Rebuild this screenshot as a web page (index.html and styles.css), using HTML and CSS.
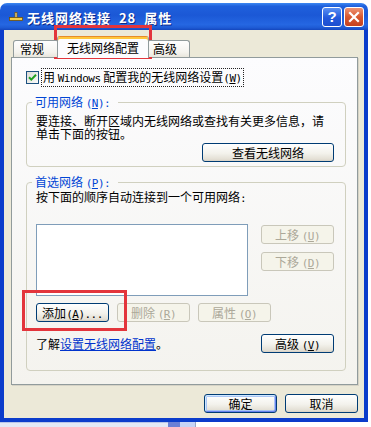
FILE: index.html
```html
<!DOCTYPE html>
<html lang="zh-CN">
<head>
    <meta charset="UTF-8">
    <meta name="viewport" content="width=device-width, initial-scale=1.0">
    <title>无线网络连接 28 属性</title>
    <link rel="stylesheet" href="styles.css">
</head>
<body>

    <div class="window">
        <div class="titlebar">
            <svg class="title-icon" width="14" height="10" viewBox="0 0 14 10">
                <rect x="6" y="0.5" width="2" height="6" fill="#f7e08a" stroke="#7a5a12" stroke-width="0.8"/>
                <rect x="0.5" y="5.5" width="13" height="3" fill="#f2cf4c" stroke="#6b4f10" stroke-width="0.8"/>
            </svg>
            <span class="title-text">无线网络连接  28  属性</span>
            <div class="title-buttons">
                <span class="tb-btn help">?</span>
                <span class="tb-btn close">
                    <svg width="12" height="12" viewBox="0 0 12 12">
                        <path d="M2 2 L10 10 M10 2 L2 10" stroke="#fff" stroke-width="2.2" stroke-linecap="square"/>
                    </svg>
                </span>
            </div>
        </div>

        <div class="client">
            <div class="tabs">
                <div class="tab first">常规</div>
                <div class="tab active">无线网络配置</div>
                <div class="tab last">高级</div>
            </div>

            <div class="panel">
                <div class="check-row">
                    <span class="checkbox">
                        <svg width="11" height="11" viewBox="0 0 11 11">
                            <path d="M2 5.2 L4.3 7.6 L9 2.8" fill="none" stroke="#21a121" stroke-width="2"/>
                        </svg>
                    </span>
                    <span class="focus">用 <span class="en">Windows</span> 配置我的无线网络设置<span class="en">(<u>W</u>)</span></span>
                </div>

                <fieldset class="group avail">
                    <legend>可用网络 <span class="en">(<u>N</u>):</span></legend>
                    <p class="note">要连接、断开区域内无线网络或查找有关更多信息，请<br>单击下面的按钮。</p>
                    <div class="row-end">
                        <button class="btn wide">查看无线网络</button>
                    </div>
                </fieldset>

                <fieldset class="group pref">
                    <legend>首选网络 <span class="en">(<u>P</u>):</span></legend>
                    <p class="note">按下面的顺序自动连接到一个可用网络<span class="en">:</span></p>
                    <div class="list-row">
                        <div class="listbox"></div>
                        <div class="side-buttons">
                            <button class="btn" disabled>上移 <span class="en">(<u>U</u>)</span></button>
                            <button class="btn" disabled>下移 <span class="en">(<u>D</u>)</span></button>
                        </div>
                    </div>
                    <div class="action-row">
                        <button class="btn">添加<span class="en">(<u>A</u>)...</span></button>
                        <button class="btn" disabled>删除 <span class="en">(<u>R</u>)</span></button>
                        <button class="btn" disabled>属性 <span class="en">(<u>O</u>)</span></button>
                    </div>
                    <div class="learn-row">
                        <span>了解<a href="#" class="link">设置无线网络配置</a>。</span>
                        <button class="btn">高级 <span class="en">(<u>V</u>)</span></button>
                    </div>
                </fieldset>
            </div>

            <div class="dialog-buttons">
                <button class="btn default">确定</button>
                <button class="btn">取消</button>
            </div>
        </div>
    </div>

    <div class="desk-strip">
        <div class="strip-a"></div>
        <div class="strip-b"></div>
        <div class="strip-c"></div>
    </div>

    <!-- red annotation boxes -->
    <div class="mark mark-tab"></div>
    <div class="mark mark-add"></div>

</body>
</html>
```

FILE: styles.css
```css
body {
    margin: 0;
    padding: 0;
    width: 371px;
    height: 427px;
    overflow: hidden;
    position: relative;
    background-color: #fff;
    font-family: "Noto Sans CJK SC", sans-serif;
    font-size: 12px;
    color: #000;
}

.en {
    font-family: "DejaVu Sans Mono", monospace;
    font-size: 11px;
    letter-spacing: -0.5px;
}

.window {
    margin-top: 3px;
    width: 368px;
}

/* title bar */
.titlebar {
    height: 27px;
    display: flex;
    align-items: center;
    padding: 1px 4px 0 9px;
    box-sizing: border-box;
    border-radius: 7px 7px 0 0;
    background: linear-gradient(to bottom, #3d88f2 0%, #1f60dc 12%, #1b58d6 45%, #2567e2 80%, #1d5ad4 92%, #1446bd 100%);
}

.title-icon {
    margin-right: 4px;
}

.title-text {
    color: #fff;
    font-weight: bold;
    font-size: 13px;
    letter-spacing: 1px;
    line-height: 15px;
    text-shadow: 1px 1px #0b2a8a;
    white-space: pre;
}

.title-buttons {
    margin-left: auto;
    display: flex;
    gap: 2px;
}

.tb-btn {
    width: 20px;
    height: 20px;
    box-sizing: border-box;
    border: 1px solid #fff;
    border-radius: 3px;
    display: flex;
    align-items: center;
    justify-content: center;
}

.help {
    background: linear-gradient(to bottom, #5a91f3, #2359dc 55%, #1c4fd0);
    color: #fff;
    font-family: "Liberation Sans", sans-serif;
    font-weight: bold;
    font-size: 15px;
    line-height: 18px;
}

.close {
    background: linear-gradient(to bottom, #ee9373, #d8582f 50%, #c4421f);
}

/* dialog body */
.client {
    background-color: #ece9d8;
    border: 4px solid #0b3ccb;
    border-top: none;
    padding: 6px 6px 5px 7px;
}

.tabs {
    display: flex;
    align-items: flex-start;
    padding-left: 2px;
    height: 22px;
    margin-bottom: -1px;
    position: relative;
    z-index: 1;
}

.tab {
    box-sizing: border-box;
    height: 17px;
    margin-top: 4px;
    border: 1px solid #919b9c;
    border-bottom: none;
    border-radius: 3px 3px 0 0;
    background: linear-gradient(to bottom, #fefefe, #f4f3ee 70%, #e8e6dc);
    line-height: 15px;
    white-space: nowrap;
}

.tab.first {
    width: 46px;
    padding-left: 6px;
}

.tab.last {
    width: 43px;
    padding-left: 5px;
}

.tab.active {
    position: relative;
    z-index: 2;
    width: 92px;
    height: 22px;
    margin: 0 -2px;
    padding-top: 3px;
    text-align: center;
    border-top: 1px solid #e68b2c;
    background: #fcfcfe;
    box-shadow: inset 0 2px #ffc73c;
}

.panel {
    border: 1px solid #919b9c;
    background: linear-gradient(to bottom, #fcfcfe, #f4f3ee);
    padding: 11px 11px 13px 14px;
    box-shadow: 1px 1px 0 #d6d3c6;
}

.check-row {
    display: flex;
    align-items: center;
    height: 17px;
}

.checkbox {
    width: 13px;
    height: 13px;
    box-sizing: border-box;
    border: 1px solid #1c5180;
    background: linear-gradient(135deg, #dcdcd7, #fbfbf9);
    margin-right: 2px;
    display: flex;
}

.focus {
    border: 1px dotted #222;
    padding: 0 1px;
    line-height: 15px;
    white-space: pre;
}

/* group boxes */
.group {
    margin: 0;
    min-width: 0;
    border: 1px solid #d0d0bf;
    border-radius: 4px;
    padding: 0 11px 4px 9px;
}

.group legend {
    height: 12px;
    line-height: 12px;
    padding: 0 8px 0 3px;
    margin-left: -4px;
    color: #0046d5;
    white-space: nowrap;
}

.group.avail {
    margin-top: 10px;
}

.group.pref {
    margin-top: 9px;
    padding-bottom: 17px;
}

.note {
    margin: 6px 0 0;
    line-height: 13px;
}

.pref .note {
    margin-top: 2px;
}

.row-end {
    display: flex;
    justify-content: flex-end;
    margin-top: 3px;
}

.list-row {
    display: flex;
    justify-content: space-between;
    margin-top: 19px;
}

.listbox {
    width: 212px;
    height: 72px;
    box-sizing: border-box;
    border: 1px solid #7f9db9;
    background-color: #fff;
}

.side-buttons {
    display: flex;
    flex-direction: column;
    gap: 8px;
    padding-top: 1px;
}

.action-row {
    display: flex;
    gap: 8px;
    margin-top: 7px;
}

.learn-row {
    display: flex;
    justify-content: space-between;
    align-items: center;
    margin-top: 12px;
    line-height: 13px;
}

.link {
    color: #0033cc;
    text-decoration: underline;
}

/* buttons */
.btn {
    box-sizing: border-box;
    width: 73px;
    height: 19px;
    padding: 0;
    border: 1px solid #003c74;
    border-radius: 3px;
    background: linear-gradient(to bottom, #ffffff, #f3f2ec 55%, #e3dfd4 90%, #d6d0c5);
    font-family: "Noto Sans CJK SC", sans-serif;
    font-size: 12px;
    line-height: 17px;
    color: #000;
    white-space: pre;
}

.btn.wide {
    width: 132px;
}

.btn:disabled {
    border-color: #c9c7ba;
    background: #f5f4ea;
    color: #aca899;
}

.btn.default {
    box-shadow: inset 1px 1px #cee7ff, inset -1px -1px #6982ee, inset 0 0 0 2px #a9c5f4;
}

.dialog-buttons {
    display: flex;
    justify-content: flex-end;
    gap: 8px;
    margin-top: 9px;
}

/* what lies under the window */
.desk-strip {
    display: flex;
    height: 7px;
}

.strip-a {
    width: 168px;
    background-color: #e3e9f6;
    border-top: 1px solid #b9c6e8;
    box-sizing: border-box;
}

.strip-b {
    width: 12px;
    background-color: #6b80d6;
}

.strip-c {
    width: 15px;
    background-color: #c7d4f6;
    border-right: 1px solid #9aa6c4;
}

/* annotations over the screenshot */
.mark {
    position: absolute;
    box-sizing: border-box;
    border: 3px solid #e3353c;
}

.mark-tab {
    left: 54px;
    top: 25px;
    width: 98px;
    height: 34px;
}

.mark-add {
    left: 22px;
    top: 290px;
    width: 105px;
    height: 41px;
}
```
